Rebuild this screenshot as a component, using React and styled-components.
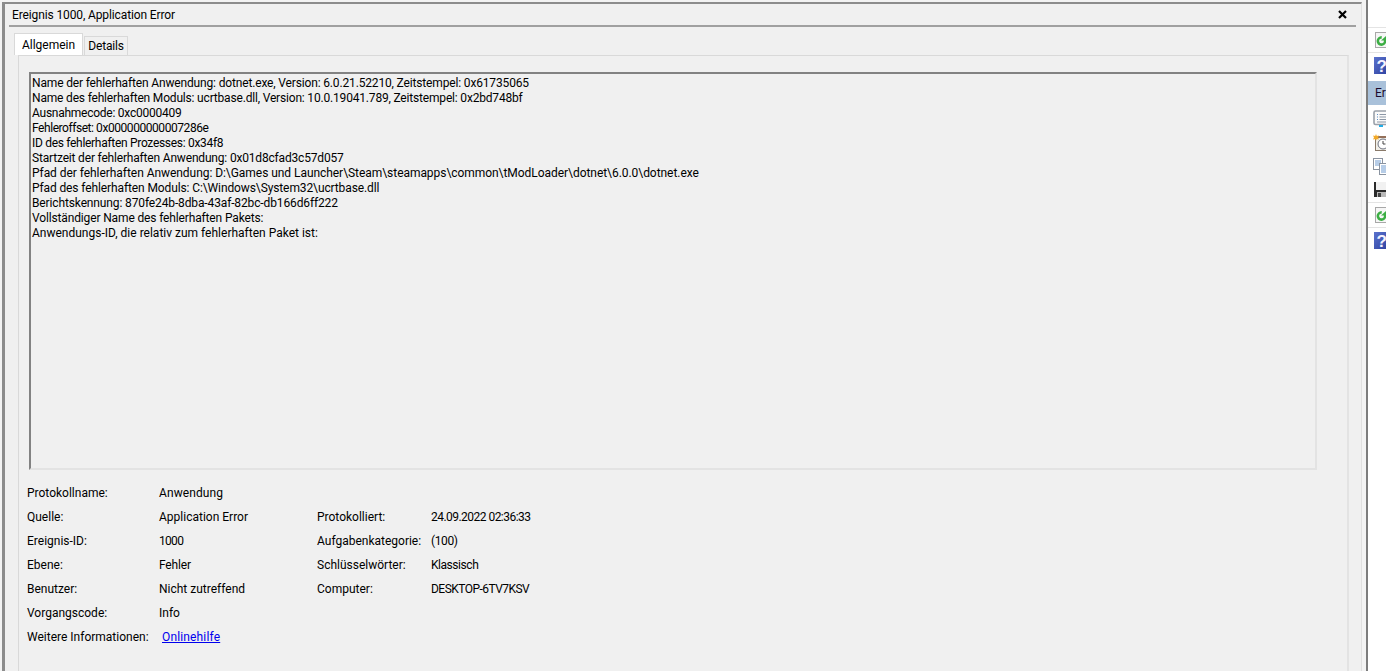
import React from 'react';
import styled, { createGlobalStyle } from 'styled-components';

const GlobalStyle = createGlobalStyle`
  html, body { margin: 0; padding: 0; height: 100%; overflow: hidden; background: #fff; }
  body { font-family: Roboto, "Open Sans", sans-serif; font-size: 12px; color: #000; }
  #root { height: 100%; }
`;

const Screen = styled.div`
  display: flex;
  width: 1386px;
  height: 671px;
  overflow: hidden;
`;

const Outer = styled.div`
  width: 1368px;
  flex: none;
  box-sizing: border-box;
  padding: 2px 4px 0 2px;
  border-right: 2px solid #7d7d7d;
  background: #f3f3f3;
`;

const Window = styled.div`
  height: 100%;
  box-sizing: border-box;
  border-top: 2px solid #8c8c8c;
  border-left: 3px solid #8c8c8c;
  border-right: 1px solid #e0e0e0;
  background: #f0f0f0;
  padding: 0 5px 0 4px;
`;

const TitleBar = styled.div`
  height: 21px;
  display: flex;
  align-items: center;
  justify-content: space-between;
  border-bottom: 2px solid #a0a0a0;
  padding: 0 9px 0 3px;
`;

const Title = styled.span`
  font-size: 12px;
  letter-spacing: -0.12px;
`;

const Tabs = styled.div`
  display: flex;
  align-items: flex-end;
  height: 28px;
  margin-left: 5px;
`;

const Tab = styled.div`
  box-sizing: border-box;
  display: flex;
  align-items: center;
  justify-content: center;
  height: ${p => (p.$active ? '22px' : '19px')};
  width: ${p => (p.$active ? '69px' : '44px')};
  padding-bottom: ${p => (p.$active ? '0' : '1px')};
  border: 1px solid #d9d9d9;
  border-bottom: none;
  background: ${p => (p.$active ? '#fff' : '#f0f0f0')};
  margin-right: ${p => (p.$active ? '1px' : '0')};
  letter-spacing: ${p => (p.$active ? '0' : '-0.2px')};
`;

const Panel = styled.div`
  width: 1331px;
  height: 640px;
  margin-left: 9px;
  box-sizing: border-box;
  border-top: 1px solid #d9d9d9;
  border-left: 1px solid #d9d9d9;
  border-right: 2px solid #e3e3e3;
  padding: 16px 0 0 10px;
`;

const MessageBox = styled.div`
  box-sizing: border-box;
  width: 1288px;
  height: 398px;
  border-top: 2px solid #828282;
  border-left: 2px solid #828282;
  border-right: 2px solid #e3e3e3;
  border-bottom: 2px solid #e3e3e3;
  padding: 2px 0 0 1px;
`;

const MessageLine = styled.div`
  height: 15px;
  line-height: 15px;
  white-space: pre;
  letter-spacing: ${p => p.$track || 0}px;
`;

const Details = styled.div`
  display: grid;
  grid-template-columns: 132px 158px 114px 1fr;
  grid-auto-rows: 24px;
  align-items: center;
  margin-top: 11px;
  margin-left: -2px;
`;

const Cell = styled.span`
  letter-spacing: ${p => p.$track || 0}px;
`;

const Link = styled.a`
  color: #0000ee;
  text-decoration: underline;
  padding-left: 3px;
  letter-spacing: 0.15px;
`;

const Sidebar = styled.div`
  flex: 1;
  display: flex;
  flex-direction: column;
  background: #fff;
  overflow: hidden;
  padding-top: 27px;
`;

const ActionRow = styled.div`
  height: ${p => (p.$line ? '25px' : '24px')};
  flex: none;
  box-sizing: border-box;
  display: flex;
  align-items: center;
  padding-left: ${p => p.$indent}px;
  font-size: 12px;
  color: #1c0a2c;
  background: ${p => (p.$active ? '#a9c1da' : 'transparent')};
  border-top: ${p => (p.$line ? '1px solid #e4e4e4' : 'none')};
  margin-top: ${p => p.$gap || 0}px;
  margin-bottom: ${p => p.$after || 0}px;

  svg { flex: none; }
`;

const RefreshIcon = () => (
  <svg width="16" height="16" viewBox="0 0 16 16">
    <rect x="0.5" y="0.5" width="15" height="15" fill="#f6f6f6" stroke="#a8a8a8" />
    <circle cx="6.5" cy="9" r="3.6" fill="none" stroke="#3cae44" strokeWidth="2.6" strokeDasharray="18 5" transform="rotate(-20 6.5 9)" />
    <path d="M6 8.5h5.5V3.5z" fill="#3cae44" />
  </svg>
);

const HelpIcon = () => (
  <svg width="16" height="17" viewBox="0 0 16 17">
    <defs>
      <linearGradient id="helpFill" x1="0" y1="0" x2="1" y2="1">
        <stop offset="0" stopColor="#5a72cc" />
        <stop offset="1" stopColor="#2c3f9e" />
      </linearGradient>
    </defs>
    <rect width="16" height="17" fill="url(#helpFill)" />
    <text x="2.5" y="14.5" fontSize="17" fontWeight="700" fill="#f2f2ff" fontFamily="Liberation Sans, sans-serif">?</text>
  </svg>
);

const ViewIcon = () => (
  <svg width="17" height="17" viewBox="0 0 17 17">
    <rect x="1" y="1" width="15" height="13.5" rx="1.5" fill="#fafafa" stroke="#9aa1aa" strokeWidth="1.6" />
    <path d="M4 4.5h1M4 7h1M4 9.5h1" stroke="#5f8fc4" />
    <path d="M6.5 4.5h7M6.5 7h7M6.5 9.5h7M4 12h9" stroke="#8c97a6" />
    <rect x="6" y="15" width="4" height="2" fill="#21aee8" />
  </svg>
);

const ClockIcon = () => (
  <svg width="17" height="17" viewBox="0 0 17 17">
    <rect x="2.5" y="3.5" width="14" height="13" fill="#f1efe8" stroke="#8a7a6a" />
    <rect x="3" y="2" width="14" height="2" fill="#94705a" />
    <circle cx="10" cy="10" r="5" fill="#fff" stroke="#6d7280" />
    <path d="M10 7v3h2.5" fill="none" stroke="#444" />
    <path d="M3 0l.8 2 2.2-.6-1 2 1 2-2.2-.4L3 6.5 2.2 5 0 5.400 1 3.400 0 1.400l2.200.6z" fill="#f2a928" />
  </svg>
);

const CopyIcon = () => (
  <svg width="17" height="17" viewBox="0 0 17 17">
    <rect x="0.500" y="0.500" width="9" height="11" fill="#fff" stroke="#8a93a0" />
    <path d="M2 3h6M2 5h6M2 7h6" stroke="#6f9bd0" />
    <rect x="6.500" y="5.500" width="10" height="11" fill="#fff" stroke="#8a93a0" />
    <path d="M8 8h7M8 10h7M8 12h7M8 14h7" stroke="#6f9bd0" />
  </svg>
);

const SaveIcon = () => (
  <svg width="16" height="16" viewBox="0 0 16 16">
    <rect width="16" height="15" fill="#2b2b2b" />
    <rect x="2" width="14" height="8" fill="#f1f1f1" />
    <rect x="3" y="10" width="10" height="5" fill="#b9b9b9" />
    <rect x="4" y="11" width="3" height="4" fill="#444" />
  </svg>
);

// [text, tracking]
const detailCells = [
  ['Protokollname:'], ['Anwendung', 0.1], [''], [''],
  ['Quelle:'], ['Application Error'], ['Protokolliert:'], ['24.09.2022 02:36:33', -0.53],
  ['Ereignis-ID:'], ['1000', -0.7], ['Aufgabenkategorie:'], ['(100)', -0.4],
  ['Ebene:'], ['Fehler', -0.15], ['Schlüsselwörter:'], ['Klassisch', -0.45],
  ['Benutzer:'], ['Nicht zutreffend'], ['Computer:'], ['DESKTOP-6TV7KSV', -0.53],
  ['Vorgangscode:'], ['Info'], [''], [''],
];

const messageLines = [
  ['Name der fehlerhaften Anwendung: dotnet.exe, Version: 6.0.21.52210, Zeitstempel: 0x61735065', -0.154],
  ['Name des fehlerhaften Moduls: ucrtbase.dll, Version: 10.0.19041.789, Zeitstempel: 0x2bd748bf', -0.18],
  ['Ausnahmecode: 0xc0000409', -0.25],
  ['Fehleroffset: 0x000000000007286e', -0.44],
  ['ID des fehlerhaften Prozesses: 0x34f8', -0.3],
  ['Startzeit der fehlerhaften Anwendung: 0x01d8cfad3c57d057', -0.18],
  ['Pfad der fehlerhaften Anwendung: D:\\Games und Launcher\\Steam\\steamapps\\common\\tModLoader\\dotnet\\6.0.0\\dotnet.exe', -0.05],
  ['Pfad des fehlerhaften Moduls: C:\\Windows\\System32\\ucrtbase.dll', -0.11],
  ['Berichtskennung: 870fe24b-8dba-43af-82bc-db166d6ff222', -0.13],
  ['Vollständiger Name des fehlerhaften Pakets:', -0.14],
  ['Anwendungs-ID, die relativ zum fehlerhaften Paket ist:', 0],
];

export default function App() {
  return (
    <Screen>
      <GlobalStyle />
      <Outer>
        <Window>
          <TitleBar>
            <Title>Ereignis 1000, Application Error</Title>
            <svg width="9" height="9" viewBox="0 0 9 9">
              <path d="M1 1l7 7M8 1L1 8" stroke="#000" strokeWidth="2.2" />
            </svg>
          </TitleBar>
          <Tabs>
            <Tab $active>Allgemein</Tab>
            <Tab>Details</Tab>
          </Tabs>
          <Panel>
            <MessageBox>
              {messageLines.map(([text, track]) => (
                <MessageLine key={text} $track={track}>{text}</MessageLine>
              ))}
            </MessageBox>
            <Details>
              {detailCells.map(([text, track], i) => (
                <Cell key={i} $track={track}>{text}</Cell>
              ))}
              <Cell>Weitere Informationen:</Cell>
              <Cell><Link href="#">Onlinehilfe</Link></Cell>
            </Details>
          </Panel>
        </Window>
      </Outer>
      <Sidebar>
        <ActionRow $line $indent={7}><RefreshIcon /></ActionRow>
        <ActionRow $line $indent={6} $after={4}><HelpIcon /></ActionRow>
        <ActionRow $active $indent={7}>Er</ActionRow>
        <ActionRow $indent={5} $gap={1}><ViewIcon /></ActionRow>
        <ActionRow $indent={5}><ClockIcon /></ActionRow>
        <ActionRow $indent={5}><CopyIcon /></ActionRow>
        <ActionRow $indent={6}><SaveIcon /></ActionRow>
        <ActionRow $line $indent={7}><RefreshIcon /></ActionRow>
        <ActionRow $line $indent={6}><HelpIcon /></ActionRow>
      </Sidebar>
    </Screen>
  );
}
